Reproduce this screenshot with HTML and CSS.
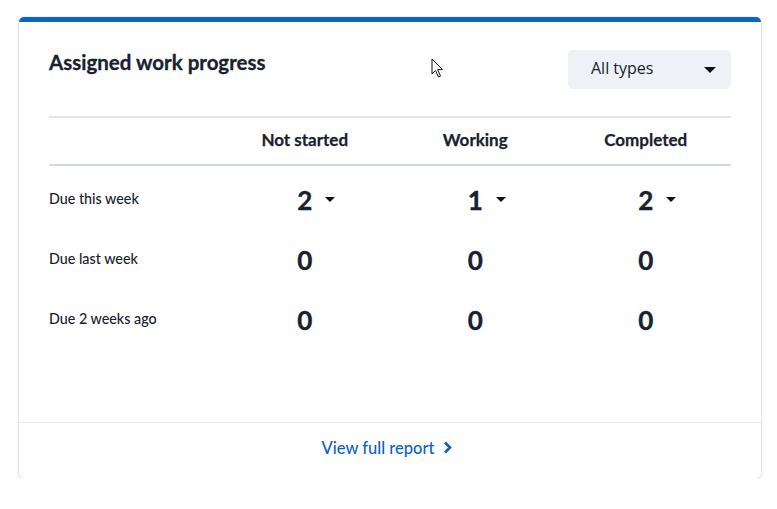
FILE: index.html
```html
<!DOCTYPE html>
<html lang="en">
<head>
  <meta charset="UTF-8">
  <meta name="viewport" content="width=device-width, initial-scale=1.0">
  <title>Assigned work progress</title>
  <link rel="stylesheet" href="styles.css">
</head>
<body>
  <div class="card">
    <div class="card-body">
      <div class="card-header">
        <h2>Assigned work progress</h2>
        <button class="type-select">
          <span>All types</span>
          <span class="caret caret-lg"></span>
        </button>
      </div>

      <div class="progress-table">
        <div class="table-head">
          <span></span>
          <span>Not started</span>
          <span>Working</span>
          <span>Completed</span>
        </div>

        <div class="table-row">
          <span class="row-label">Due this week</span>
          <span class="count"><span class="num">2<span class="caret"></span></span></span>
          <span class="count"><span class="num">1<span class="caret"></span></span></span>
          <span class="count"><span class="num">2<span class="caret"></span></span></span>
        </div>

        <div class="table-row">
          <span class="row-label">Due last week</span>
          <span class="count"><span class="num">0</span></span>
          <span class="count"><span class="num">0</span></span>
          <span class="count"><span class="num">0</span></span>
        </div>

        <div class="table-row">
          <span class="row-label">Due 2 weeks ago</span>
          <span class="count"><span class="num">0</span></span>
          <span class="count"><span class="num">0</span></span>
          <span class="count"><span class="num">0</span></span>
        </div>
      </div>
    </div>

    <div class="card-footer">
      <a href="#" class="report-link">View full report
        <svg width="10" height="13" viewBox="0 0 10 13"><path d="M2 1.5 L7 6.5 L2 11.5" fill="none" stroke="#0b63bf" stroke-width="2.6"/></svg>
      </a>
    </div>

    <!-- mouse pointer -->
    <svg class="pointer" width="14" height="21" viewBox="0 0 14 21">
      <path d="M1 1 L1 16 L4.5 12.5 L7.5 19 L9.5 18 L6.6 11.6 L11.5 11.6 Z" fill="#fff" stroke="#111" stroke-width="1"/>
    </svg>
  </div>
</body>
</html>
```

FILE: styles.css
```css
body {
  margin: 0;
  padding: 17px 16px 0 19px;
  background: #fff;
  font-family: Lato, "Open Sans", sans-serif;
  color: #18222f;
}

.card {
  position: relative;
  width: 742px;
  background: #fff;
  border-top: 5px solid #0b65c2;
  border-radius: 5px;
  box-shadow: 0 0 0 1px rgba(0, 0, 0, 0.05), 0 2px 4px rgba(0, 0, 0, 0.12);
}

.card-body {
  padding: 28px 30px 72px;
}

.card-header {
  display: flex;
  justify-content: space-between;
  align-items: flex-start;
  padding-bottom: 27px;
  border-bottom: 2px solid #e2e5ea;
}

.card-header h2 {
  margin: 0;
  font-size: 20.5px;
  font-weight: 700;
  line-height: 24px;
  -webkit-text-stroke: 0.3px #18222f;
}

.type-select {
  display: flex;
  align-items: center;
  justify-content: space-between;
  width: 163px;
  height: 39px;
  padding: 0 15px 3px 23px;
  border: none;
  border-radius: 5px;
  background: #eef1f5;
  font-family: "Open Sans", sans-serif;
  font-size: 16px;
  color: #18222f;
}

.caret {
  display: inline-block;
  width: 0;
  height: 0;
  border-left: 5px solid transparent;
  border-right: 5px solid transparent;
  border-top: 5px solid #111;
}

.caret-lg {
  border-left-width: 6px;
  border-right-width: 6px;
  border-top-width: 6px;
  margin-top: 3px;
}

.table-head,
.table-row {
  display: grid;
  grid-template-columns: repeat(4, 1fr);
  align-items: center;
}

.table-head {
  height: 42px;
  padding-bottom: 4px;
  border-bottom: 2px solid #d4dae1;
  font-size: 17px;
  font-weight: 700;
  text-align: center;
  -webkit-text-stroke: 0.25px #18222f;
}

.table-row {
  height: 60px;
}

.table-head + .table-row {
  margin-top: 4px;
}

.row-label {
  font-size: 14.3px;
  font-weight: 500;
  margin-top: -4px;
}

.count {
  text-align: center;
}

.num {
  position: relative;
  font-size: 26px;
  font-weight: 700;
  line-height: 30px;
  -webkit-text-stroke: 0.4px #18222f;
}

.num .caret {
  position: absolute;
  left: calc(100% + 13px);
  top: 13px;
}

.card-footer {
  display: flex;
  justify-content: center;
  align-items: center;
  height: 55px;
  border-top: 1px solid #e4e6e9;
}

.report-link {
  display: flex;
  align-items: center;
  gap: 8px;
  color: #0b63bf;
  text-decoration: none;
  font-size: 16.5px;
  font-weight: 500;
  margin: -6px 0 0 -6px;
}

.pointer {
  position: absolute;
  left: 412px;
  top: 36px;
}
```
